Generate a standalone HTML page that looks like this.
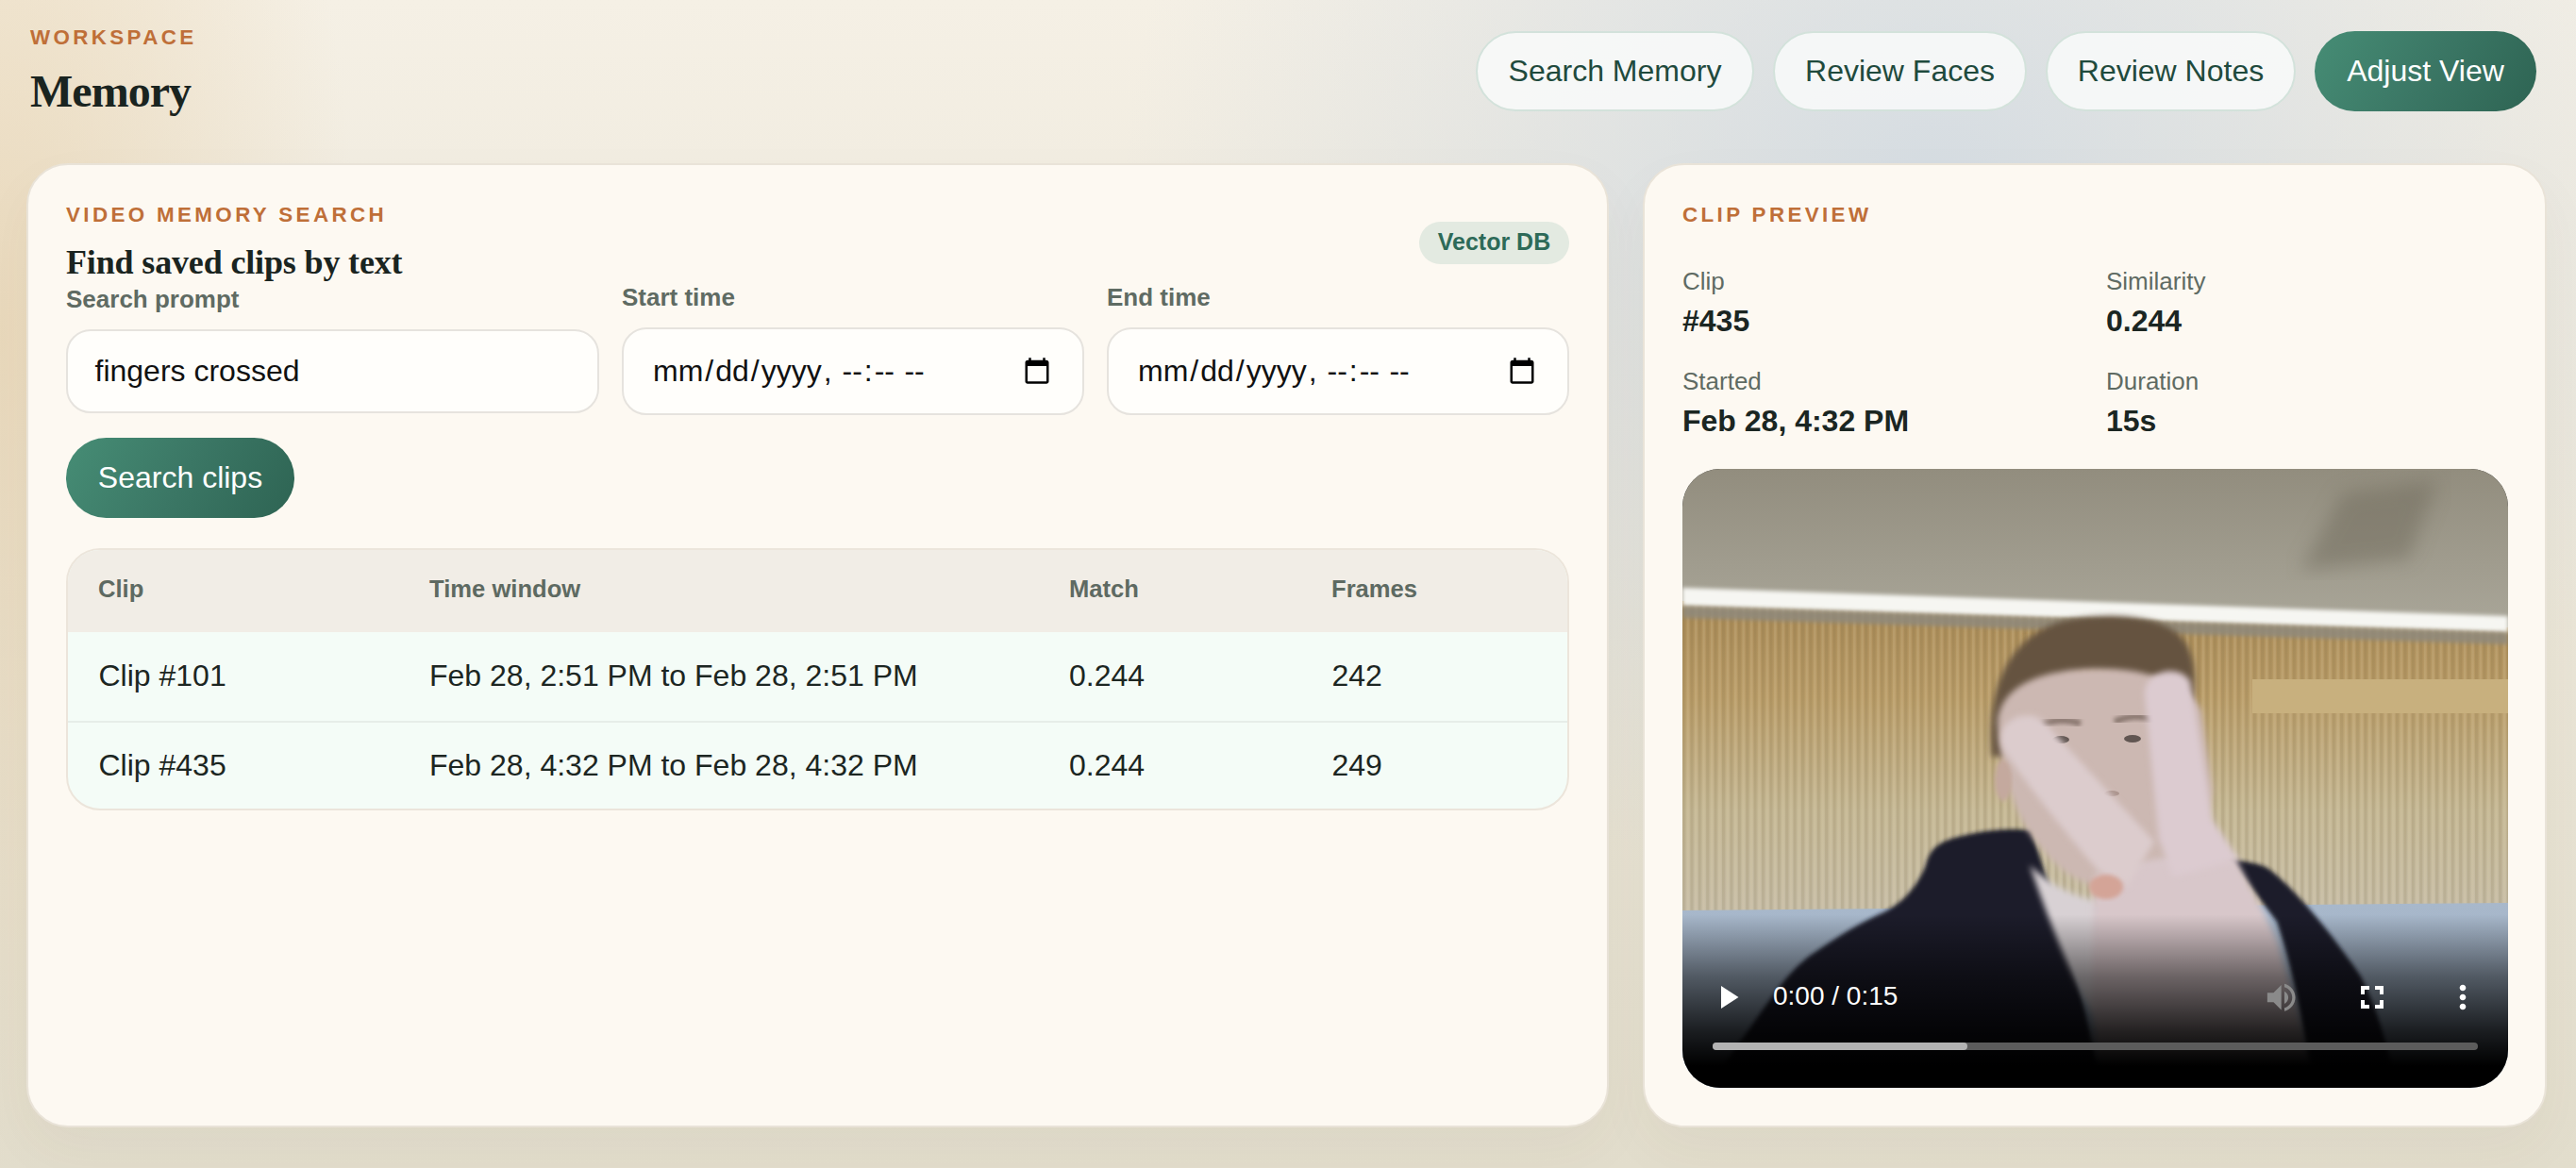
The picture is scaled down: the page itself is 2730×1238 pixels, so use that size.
<!DOCTYPE html>
<html>
<head>
<meta charset="utf-8">
<style>
*{box-sizing:border-box;margin:0;padding:0}
html,body{width:2730px;height:1238px;overflow:hidden}
body{position:relative;font-family:"Liberation Sans",sans-serif;color:#1b2622;
background:
 radial-gradient(ellipse 380px 900px at 0px 350px, rgba(229,205,165,0.6), rgba(229,205,165,0) 100%),
 radial-gradient(ellipse 860px 760px at 2050px 200px, rgba(206,216,226,0.8), rgba(206,216,226,0) 100%),
 linear-gradient(180deg,#f5f0e5 0%,#ece7da 40%,#e2ddcc 100%);}
.abs{position:absolute;white-space:nowrap}
.eyebrow{font-weight:700;font-size:22.4px;line-height:23px;letter-spacing:3.36px;color:#bf6f38;text-transform:uppercase}
.title{font-family:"Liberation Serif",serif;font-weight:700;color:#1a2420}
.nav{position:absolute;top:33px;height:85px;border:2px solid #d3e2db;border-radius:999px;background:rgba(250,251,251,0.82);
 font-size:32px;color:#1f4a3d;display:flex;align-items:center;justify-content:center;white-space:nowrap}
.primary{background:linear-gradient(120deg,#468d75 0%,#3b7765 50%,#2e6453 100%);color:#fff;border:none}
.card{position:absolute;top:173px;height:1022px;border:2px solid #e9e3d8;border-radius:44px;background:#fdf9f2;
 box-shadow:0 24px 60px rgba(90,75,50,0.045)}
.label{font-size:26px;line-height:26px;font-weight:700;color:#5f6b63}
.input{position:absolute;border:2px solid #e6e3de;border-radius:26px;background:#fffefb}
.date{font-family:"Liberation Sans",sans-serif;font-size:32px;color:#111;padding:0 30px 0 29px;outline:none}
.date::-webkit-datetime-edit-month-field,.date::-webkit-datetime-edit-day-field,.date::-webkit-datetime-edit-year-field,.date::-webkit-datetime-edit-hour-field,.date::-webkit-datetime-edit-minute-field,.date::-webkit-datetime-edit-ampm-field{padding:2px}
.itext{font-size:32px;line-height:32px;color:#111}
.th{font-size:25.6px;line-height:26px;font-weight:700;color:#5e6a62}
.td{font-size:32px;line-height:32px;color:#1c2622}
.mlabel{font-size:26px;line-height:26px;color:#5f6b63}
.mval{font-size:32px;line-height:32px;font-weight:700;color:#1b2622}
</style>
</head>
<body>
<!-- header -->
<div class="abs eyebrow" style="left:32px;top:28px">Workspace</div>
<div class="abs title" style="left:32px;top:72.5px;font-size:48px;line-height:48px;letter-spacing:-0.96px">Memory</div>

<div class="nav" style="left:1564px;width:295px">Search Memory</div>
<div class="nav" style="left:1879px;width:269px">Review Faces</div>
<div class="nav" style="left:2168px;width:265px">Review Notes</div>
<div class="nav primary" style="left:2453px;top:33px;width:235px;height:85px">Adjust View</div>

<!-- left card -->
<div class="card" style="left:28px;width:1677px"></div>
<div class="abs eyebrow" style="left:70px;top:216px">Video memory search</div>
<div class="abs title" style="left:70px;top:260px;font-size:36px;line-height:36px;letter-spacing:-0.15px">Find saved clips by text</div>
<div class="abs" style="left:1504px;top:235px;width:159px;height:45px;border-radius:999px;background:#e3eae1;color:#2d6a58;font-size:25px;font-weight:700;display:flex;align-items:center;justify-content:center;padding-bottom:2px">Vector DB</div>

<div class="abs label" style="left:70px;top:304px">Search prompt</div>
<div class="abs label" style="left:659px;top:302px">Start time</div>
<div class="abs label" style="left:1173px;top:302px">End time</div>

<div class="input" style="left:70px;top:349px;width:565px;height:89px"></div>
<div class="abs itext" style="left:100.5px;top:377px">fingers crossed</div>
<input type="datetime-local" class="input date" style="left:659px;top:347px;width:490px;height:93px">
<input type="datetime-local" class="input date" style="left:1173px;top:347px;width:490px;height:93px">

<div class="abs primary" style="left:70px;top:464px;width:242px;height:85px;border-radius:999px;display:flex;align-items:center;justify-content:center;font-size:32px;color:#fff">Search clips</div>

<!-- table -->
<div class="abs" style="left:70px;top:581px;width:1593px;height:278px;border:2px solid #ece5db;border-radius:36px;overflow:hidden;background:#f4fcf7">
  <div style="position:absolute;left:0;top:0;right:0;height:87px;background:#f1ede6"></div>
  <div style="position:absolute;left:0;top:181px;right:0;height:2px;background:#e6ede8"></div>
</div>
<div class="abs th" style="left:104px;top:611px">Clip</div>
<div class="abs th" style="left:455px;top:611px">Time window</div>
<div class="abs th" style="left:1133px;top:611px">Match</div>
<div class="abs th" style="left:1411px;top:611px">Frames</div>

<div class="abs td" style="left:104.5px;top:700px">Clip #101</div>
<div class="abs td" style="left:455px;top:700px">Feb 28, 2:51 PM to Feb 28, 2:51 PM</div>
<div class="abs td" style="left:1133px;top:700px">0.244</div>
<div class="abs td" style="left:1411.5px;top:700px">242</div>
<div class="abs td" style="left:104.5px;top:795px">Clip #435</div>
<div class="abs td" style="left:455px;top:795px">Feb 28, 4:32 PM to Feb 28, 4:32 PM</div>
<div class="abs td" style="left:1133px;top:795px">0.244</div>
<div class="abs td" style="left:1411.5px;top:795px">249</div>

<!-- right card -->
<div class="card" style="left:1741px;width:958px"></div>
<div class="abs eyebrow" style="left:1783px;top:216px">Clip preview</div>
<div class="abs mlabel" style="left:1783px;top:285px">Clip</div>
<div class="abs mval" style="left:1783px;top:324px">#435</div>
<div class="abs mlabel" style="left:2232px;top:285px">Similarity</div>
<div class="abs mval" style="left:2232px;top:324px">0.244</div>
<div class="abs mlabel" style="left:1783px;top:391px">Started</div>
<div class="abs mval" style="left:1783px;top:430px">Feb 28, 4:32 PM</div>
<div class="abs mlabel" style="left:2232px;top:391px">Duration</div>
<div class="abs mval" style="left:2232px;top:430px">15s</div>

<!-- video -->
<div id="video" class="abs" style="left:1783px;top:497px;width:875px;height:656px;border-radius:40px;overflow:hidden;background:#222">
<svg width="875" height="656" viewBox="0 0 875 656" style="position:absolute;left:0;top:0">
<defs>
 <linearGradient id="ceil" x1="0" y1="0" x2="0" y2="1">
  <stop offset="0" stop-color="#928d7e"/><stop offset="1" stop-color="#aeab9e"/>
 </linearGradient>
 <linearGradient id="wall" x1="0" y1="0" x2="0" y2="1">
  <stop offset="0" stop-color="#a98a56"/><stop offset="0.3" stop-color="#b99c68"/><stop offset="0.65" stop-color="#c4b794"/><stop offset="1" stop-color="#c6bda8"/>
 </linearGradient>
 <pattern id="slats" width="8.4" height="20" patternUnits="userSpaceOnUse">
  <rect x="0" y="0" width="3.2" height="20" fill="#6e5a36" opacity="0.13"/>
  <rect x="4.6" y="0" width="2.6" height="20" fill="#f4e6c0" opacity="0.14"/>
 </pattern>
 <linearGradient id="sofa" x1="0" y1="0" x2="0" y2="1">
  <stop offset="0" stop-color="#a8b8cb"/><stop offset="1" stop-color="#9cadc2"/>
 </linearGradient>
 <linearGradient id="shade" x1="0" y1="0" x2="0" y2="1">
  <stop offset="0" stop-color="#000" stop-opacity="0"/>
  <stop offset="0.72" stop-color="#000" stop-opacity="0"/>
  <stop offset="0.82" stop-color="#000" stop-opacity="0.5"/>
  <stop offset="0.91" stop-color="#000" stop-opacity="0.84"/>
  <stop offset="0.965" stop-color="#000" stop-opacity="1"/>
  <stop offset="1" stop-color="#000" stop-opacity="1"/>
 </linearGradient>
 <filter id="b2"><feGaussianBlur stdDeviation="2"/></filter>
 <filter id="b3"><feGaussianBlur stdDeviation="3"/></filter>
 <filter id="b6"><feGaussianBlur stdDeviation="6"/></filter>
 <filter id="b10"><feGaussianBlur stdDeviation="10"/></filter>
</defs>
<rect x="0" y="0" width="875" height="200" fill="url(#ceil)"/>
<path d="M700 25 L800 12 L770 95 L655 108 Z" fill="#6f6a5c" opacity="0.5" filter="url(#b10)"/>
<path d="M0 140 L875 168 L875 480 L0 480 Z" fill="url(#wall)"/>
<path d="M0 140 L875 168 L875 480 L0 480 Z" fill="url(#slats)"/>
<rect x="604" y="223" width="271" height="36" fill="#c8b07e"/>
<path d="M0 126 L875 156 L875 174 L0 146 Z" fill="#f6f6f2" filter="url(#b2)"/>
<path d="M0 145 L875 173 L875 186 L0 158 Z" fill="#8f897c" opacity="0.85" filter="url(#b2)"/>
<path d="M0 468 L875 460 L875 656 L0 656 Z" fill="url(#sofa)"/>
<!-- hoodie left -->
<path d="M30 656 C45 630 55 615 70 595 C95 560 110 535 135 516 C165 495 190 480 211 471 C235 460 250 440 258 420 C262 405 268 398 285 392 C315 383 345 380 370 383 C378 410 390 445 400 480 C415 520 430 590 445 656 Z" fill="#1b1f2c" filter="url(#b2)"/>
<!-- hoodie right -->
<path d="M580 414 C598 416 610 418 620 423 C650 445 690 495 719 538 C735 570 748 610 756 656 L665 656 C660 600 650 540 630 480 Z" fill="#1b1f2c" filter="url(#b2)"/>
<!-- neck / shirt -->
<path d="M368 420 C390 440 410 452 440 458 L448 600 L425 560 C405 520 385 470 368 420 Z" fill="#d8d1d4" filter="url(#b3)"/>
<!-- hair -->
<path d="M328 305 C322 232 345 180 400 162 C450 150 510 155 530 180 C546 200 544 232 540 262 L520 250 C500 226 470 216 430 216 C392 219 362 238 348 305 Z" fill="#65523f" filter="url(#b3)"/>
<!-- face -->
<path d="M334 268 C338 228 382 214 430 212 C485 210 530 222 550 256 L562 340 C555 385 530 420 490 440 C455 455 410 440 383 405 C355 375 338 330 334 268 Z" fill="#ccb8b2" filter="url(#b3)"/>
<ellipse cx="340" cy="330" rx="9" ry="22" fill="#c4a99e" filter="url(#b2)"/>
<path d="M380 272 Q400 262 422 270" stroke="#5e4e44" stroke-width="7" fill="none" opacity="0.6" filter="url(#b2)"/>
<path d="M458 268 Q480 258 500 266" stroke="#5e4e44" stroke-width="7" fill="none" opacity="0.6" filter="url(#b2)"/>
<ellipse cx="401" cy="287" rx="9" ry="4" fill="#3e3532" opacity="0.75"/>
<ellipse cx="477" cy="286" rx="9" ry="4" fill="#3e3532" opacity="0.75"/>
<ellipse cx="455" cy="344" rx="8" ry="3" fill="#8a7068" opacity="0.5"/>
<!-- palm -->
<path d="M437 430 C470 415 540 405 586 412 C600 440 615 467 630 500 C642 542 655 580 662 620 L672 656 L445 656 C438 620 430 560 437 430 Z" fill="#d8c7ca" filter="url(#b3)"/>
<!-- finger diagonal -->
<path d="M342 300 C330 280 345 258 372 262 C380 264 386 270 392 278 L500 395 L472 442 L440 425 C410 390 365 335 342 300 Z" fill="#dccccd" filter="url(#b3)"/>
<!-- finger up -->
<path d="M490 240 C488 215 525 205 538 225 L562 372 L590 414 L520 432 L505 392 Z" fill="#dccbd0" filter="url(#b3)"/>
<ellipse cx="449" cy="443" rx="18" ry="13" fill="#d4a497" filter="url(#b2)"/>
<rect x="0" y="0" width="875" height="656" fill="url(#shade)"/>
</svg>
<svg width="875" height="656" viewBox="0 0 875 656" style="position:absolute;left:0;top:0">
<path d="M41 548 L59.5 560 L41 572 Z" fill="#fff"/>
<path transform="translate(614.9 540.5) scale(1.65)" fill="#8a8a8a" d="M3 9v6h4l5 5V4L7 9H3zm13.5 3c0-1.77-1.02-3.29-2.5-4.03v8.05c1.48-.73 2.5-2.25 2.5-4.02zM14 3.23v2.06c2.89.86 5 3.54 5 6.71s-2.11 5.85-5 6.71v2.06c4.01-.91 7-4.49 7-8.77s-2.99-7.86-7-8.77z"/>
<g fill="#fff">
 <rect x="719" y="548" width="9" height="4"/><rect x="719" y="548" width="4" height="9"/>
 <rect x="734" y="548" width="9" height="4"/><rect x="739" y="548" width="4" height="9"/>
 <rect x="719" y="568" width="9" height="4"/><rect x="719" y="563" width="4" height="9"/>
 <rect x="734" y="568" width="9" height="4"/><rect x="739" y="563" width="4" height="9"/>
</g>
<path transform="translate(807 540) scale(1.667)" fill="#fff" d="M12 8c1.1 0 2-.9 2-2s-.9-2-2-2-2 .9-2 2 .9 2 2 2zm0 2c-1.1 0-2 .9-2 2s.9 2 2 2 2-.9 2-2-.9-2-2-2zm0 6c-1.1 0-2 .9-2 2s.9 2 2 2 2-.9 2-2-.9-2-2-2z"/>
<rect x="32" y="608" width="811" height="8" rx="4" fill="#5c5c5c"/>
<rect x="32" y="608" width="270" height="8" rx="4" fill="#b3b3b3"/>
</svg>
<div style="position:absolute;left:96px;top:545px;font-size:28px;line-height:28px;color:#fff;white-space:nowrap">0:00 / 0:15</div>
</div>

</body>
</html>
